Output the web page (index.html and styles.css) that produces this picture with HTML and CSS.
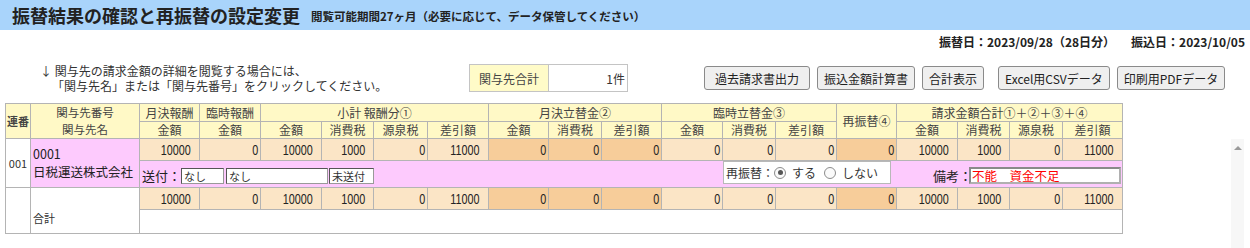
FILE: index.html
```html
<!DOCTYPE html>
<html lang="ja">
<head>
<meta charset="utf-8">
<title>振替結果の確認と再振替の設定変更</title>
<link rel="stylesheet" href="styles.css">
</head>
<body>
<header class="titlebar">
  <h1>振替結果の確認と再振替の設定変更</h1>
  <span class="sub">閲覧可能期間27ヶ月（必要に応じて、データ保管してください）</span>
</header>
<div class="dates">
  <span>振替日：2023/09/28（28日分）</span>
  <span>振込日：2023/10/05</span>
</div>
<div class="toolbar">
  <p class="note">↓ 関与先の請求金額の詳細を閲覧する場合には、<br><span class="indent">「関与先名」または「関与先番号」をクリックしてください。</span></p>
  <table class="count">
    <tr><th>関与先合計</th><td>1件</td></tr>
  </table>
  <div class="buttons">
    <button class="btn btn-wide">過去請求書出力</button>
    <button class="btn">振込金額計算書</button>
    <button class="btn">合計表示</button>
    <button class="btn btn-sep">Excel用CSVデータ</button>
    <button class="btn">印刷用PDFデータ</button>
  </div>
</div>
<table class="grid">
  <colgroup>
    <col class="w25"><col class="w109">
    <col class="w60"><col class="w61">
    <col class="w61"><col class="w52"><col class="w54"><col class="w61">
    <col class="w60"><col class="w53"><col class="w60">
    <col class="w61"><col class="w53"><col class="w61">
    <col class="w60">
    <col class="w61"><col class="w52"><col class="w53"><col class="w60">
  </colgroup>
  <thead>
    <tr class="h1">
      <th rowspan="2" class="seq-h">連番</th>
      <th rowspan="2" class="name-h"><div class="two">関与先番号</div><div class="two">関与先名</div></th>
      <th>月決報酬</th>
      <th>臨時報酬</th>
      <th colspan="4">小計 報酬分①</th>
      <th colspan="3">月決立替金②</th>
      <th colspan="3">臨時立替金③</th>
      <th rowspan="2">再振替④</th>
      <th colspan="4">請求金額合計①＋②＋③＋④</th>
    </tr>
    <tr class="h2">
      <th>金額</th><th>金額</th>
      <th>金額</th><th>消費税</th><th>源泉税</th><th>差引額</th>
      <th>金額</th><th>消費税</th><th>差引額</th>
      <th>金額</th><th>消費税</th><th>差引額</th>
      <th>金額</th><th>消費税</th><th>源泉税</th><th>差引額</th>
    </tr>
  </thead>
  <tbody>
    <tr class="vals">
      <td rowspan="2" class="seq">001</td>
      <td rowspan="2" class="name"><div class="nline">0001</div><div class="nline">日税運送株式会社</div></td>
      <td class="n"><span class="v">10000</span></td><td class="z"><span class="v">0</span></td>
      <td class="n"><span class="v">10000</span></td><td class="n"><span class="v">1000</span></td><td class="z"><span class="v">0</span></td><td class="n"><span class="v">11000</span></td>
      <td class="z dk"><span class="v">0</span></td><td class="z dk"><span class="v">0</span></td><td class="z dk"><span class="v">0</span></td>
      <td class="z"><span class="v">0</span></td><td class="z"><span class="v">0</span></td><td class="z"><span class="v">0</span></td>
      <td class="z dk"><span class="v">0</span></td>
      <td class="n"><span class="v">10000</span></td><td class="n"><span class="v">1000</span></td><td class="z"><span class="v">0</span></td><td class="n"><span class="v">11000</span></td>
    </tr>
    <tr class="detail">
      <td colspan="17" class="detail-cell">
        <div class="detail-row">
          <span class="lbl">送付：</span>
          <span class="field f1">なし</span>
          <span class="field f2">なし</span>
          <span class="field f3">未送付</span>
          <div class="rebox">
            <span class="rlbl">再振替：</span>
            <span class="radio on"></span><span class="rtext">する</span>
            <span class="radio"></span><span class="rtext">しない</span>
          </div>
          <span class="lbl memo-lbl">備考：</span>
          <span class="memo">不能　資金不足</span>
        </div>
      </td>
    </tr>
    <tr class="vals">
      <td rowspan="2" class="seq"></td>
      <td rowspan="2" class="total-name">合計</td>
      <td class="n"><span class="v">10000</span></td><td class="z"><span class="v">0</span></td>
      <td class="n"><span class="v">10000</span></td><td class="n"><span class="v">1000</span></td><td class="z"><span class="v">0</span></td><td class="n"><span class="v">11000</span></td>
      <td class="z dk"><span class="v">0</span></td><td class="z dk"><span class="v">0</span></td><td class="z dk"><span class="v">0</span></td>
      <td class="z"><span class="v">0</span></td><td class="z"><span class="v">0</span></td><td class="z"><span class="v">0</span></td>
      <td class="z dk"><span class="v">0</span></td>
      <td class="n"><span class="v">10000</span></td><td class="n"><span class="v">1000</span></td><td class="z"><span class="v">0</span></td><td class="n"><span class="v">11000</span></td>
    </tr>
    <tr class="blank">
      <td colspan="17"></td>
    </tr>
  </tbody>
</table>
<div class="scroll"><span class="arrow"></span></div>
</body>
</html>
```

FILE: styles.css
```css
html, body {
  margin: 0;
  padding: 0;
}
body {
  width: 1250px;
  height: 248px;
  overflow: hidden;
  position: relative;
  background: #ffffff;
  color: #333333;
  font-family: "Noto Sans CJK JP", "Liberation Sans", sans-serif;
}

.titlebar {
  height: 30px;
  background: #a9d4fb;
  display: flex;
  align-items: center;
  padding-left: 12px;
  gap: 11px;
}
.titlebar h1 {
  margin: 0;
  font-size: 18px;
  line-height: 30px;
  font-weight: bold;
  color: #222222;
}
.titlebar .sub {
  font-size: 11.5px;
  font-weight: bold;
  color: #222222;
  padding-top: 2px;
}

.dates {
  display: flex;
  justify-content: flex-end;
  gap: 16px;
  padding: 4px 5px 0 0;
  font-size: 12px;
  line-height: 16px;
  font-weight: bold;
  color: #222222;
}

.toolbar {
  display: flex;
  align-items: center;
  margin-top: 14px;
  height: 28px;
  padding-left: 40px;
}
.note {
  margin: 0;
  flex: 0 0 429px;
  font-size: 12px;
  line-height: 15px;
  color: #333333;
}
.note .indent {
  padding-left: 12px;
}

.count {
  border-collapse: collapse;
  font-size: 12px;
  height: 28px;
}
.count th, .count td {
  border: 1px solid #c4c4c4;
  padding: 0 3px;
  height: 26px;
}
.count th {
  width: 72px;
  background: #fffbc8;
  font-weight: normal;
  color: #444444;
}
.count td {
  width: 73px;
  text-align: right;
  background: #ffffff;
  padding-right: 2px;
}

.buttons {
  display: flex;
  gap: 7px;
  margin-left: 76px;
}
.btn {
  height: 24px;
  padding: 0 6px;
  font-family: "Noto Sans CJK JP", "Liberation Sans", sans-serif;
  font-size: 12px;
  color: #222222;
  background: #efefef;
  border: 1px solid #8a8a8a;
  border-radius: 3px;
}
.btn-wide {
  width: 106px;
}
.btn-sep {
  margin-left: 7px;
}

.grid {
  margin: 11px 0 0 5px;
  border-collapse: collapse;
  table-layout: fixed;
  width: 1117px;
  font-size: 12px;
}
.w25 { width: 25px; }
.w109 { width: 109px; }
.w52 { width: 52px; }
.w53 { width: 53px; }
.w54 { width: 54px; }
.w60 { width: 60px; }
.w61 { width: 61px; }

.grid th, .grid td {
  border: 1px solid #b4b4b4;
  padding: 0;
  overflow: hidden;
  white-space: nowrap;
}
.grid th {
  background: #fff9c6;
  font-weight: normal;
  color: #444444;
  text-align: center;
  line-height: 14px;
}
.grid tr.h1 { height: 18px; }
.grid tr.h2 { height: 17px; }
.grid th.seq-h {
  font-size: 11px;
  font-weight: bold;
  color: #444444;
}
.grid th.name-h {
  font-size: 11.5px;
}
.grid th.name-h .two {
  height: 17px;
  line-height: 17px;
}

.grid tr.vals { height: 22px; }
.grid tr.vals td {
  background: #fbe5c6;
  text-align: right;
  font-family: "Liberation Sans", "Noto Sans CJK JP", sans-serif;
  font-size: 15px;
  line-height: 18px;
  color: #222222;
}
.grid tr.vals td .v {
  display: inline-block;
  transform: scaleX(0.72);
  transform-origin: right center;
}
.grid tr.vals td.dk {
  background: #f7cd9a;
}
.grid td.n { padding-right: 8px; }
.grid td.z { padding-right: 2px; }

.grid tr.vals td.seq {
  background: #ffffff;
  text-align: center;
  font-family: "Noto Sans CJK JP", sans-serif;
  font-size: 11px;
  color: #333333;
}
.grid tr.vals td.name {
  background: #fdcafd;
  text-align: left;
  font-family: "Noto Sans CJK JP", "Liberation Sans", sans-serif;
  font-size: 12.5px;
  padding-left: 2px;
  color: #222222;
}
.grid tr.vals td.name .nline {
  height: 18.5px;
  line-height: 18.5px;
}
.grid tr.vals td.total-name {
  background: #ffffff;
  text-align: left;
  font-family: "Noto Sans CJK JP", sans-serif;
  font-size: 11px;
  padding: 14px 0 0 2px;
  color: #333333;
}

.grid tr.detail { height: 27px; }
.grid td.detail-cell {
  background: #fdcafd;
  vertical-align: bottom;
}
.detail-row {
  display: flex;
  align-items: flex-end;
  height: 26px;
  padding: 0 1px 3px 2px;
  box-sizing: border-box;
  font-size: 13px;
  color: #222222;
}
.lbl {
  line-height: 16px;
  width: 39px;
}
.field {
  box-sizing: border-box;
  height: 16px;
  border: 1px solid #555555;
  border-right-color: #999999;
  border-bottom-color: #999999;
  background: #ffffff;
  font-size: 11px;
  line-height: 14px;
  padding-left: 2px;
  color: #333333;
}
.f1 { width: 43px; margin-right: 2px; }
.f2 { width: 102px; margin-right: 1px; }
.f3 { width: 45px; }

.rebox {
  box-sizing: border-box;
  width: 168px;
  height: 23px;
  margin-left: 349px;
  background: #ffffff;
  border: 1px solid #b8b8b8;
  display: flex;
  align-items: center;
  padding-left: 2px;
  font-size: 12px;
}
.rlbl {
  width: 48px;
  color: #333333;
}
.radio {
  box-sizing: border-box;
  width: 12px;
  height: 12px;
  border: 1px solid #8c8c8c;
  border-radius: 50%;
  background: #fafafa;
  margin-right: 6px;
  position: relative;
}
.radio.on::after {
  content: "";
  position: absolute;
  left: 2.5px;
  top: 2.5px;
  width: 5px;
  height: 5px;
  border-radius: 50%;
  background: #555555;
}
.rtext {
  color: #333333;
  margin-right: 8px;
}

.memo-lbl {
  margin-left: auto;
  width: 36px;
}
.memo {
  box-sizing: border-box;
  width: 152px;
  height: 17px;
  border: 2px solid #8a8a8a;
  border-right-color: #b0b0b0;
  border-bottom-color: #b0b0b0;
  background: #ffffff;
  color: #ff0000;
  font-size: 12.5px;
  line-height: 13px;
  padding-left: 1px;
}

.grid tr.blank { height: 24px; }
.grid tr.blank td {
  background: #ffffff;
}

.scroll {
  position: absolute;
  left: 1231px;
  top: 139px;
  width: 13px;
  bottom: 0;
  background: #f7f7f7;
}
.scroll .arrow {
  position: absolute;
  left: 3px;
  top: 7px;
  width: 0;
  height: 0;
  border-left: 4px solid transparent;
  border-right: 4px solid transparent;
  border-bottom: 4px solid #9a9a9a;
}
```
